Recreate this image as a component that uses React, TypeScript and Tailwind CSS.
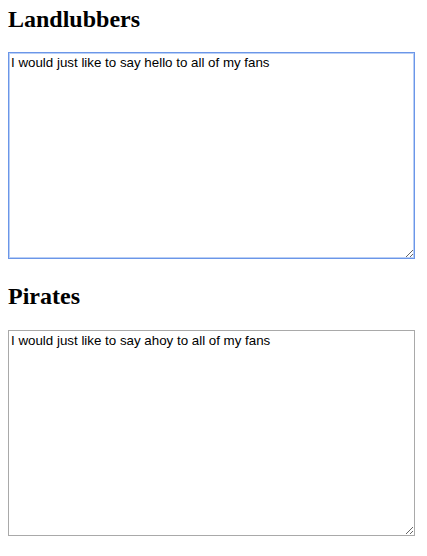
export default function App() {
  return (
    <div className="min-h-screen bg-white pl-[8px] pt-[6px]">
      <h2 className="mb-[19px] font-['Liberation_Serif',serif] text-[24px] font-bold leading-[27px] text-black">
        Landlubbers
      </h2>
      <textarea
        defaultValue="I would just like to say hello to all of my fans"
        className="mb-[24px] block h-[207px] w-[407px] resize border border-[#6b96e8] p-[2px] font-['Liberation_Sans',Arial,sans-serif] text-[13.33px] leading-[15px] text-black shadow-[0_0_0_1px_#b9cff6_inset] outline-none"
      />
      <h2 className="mb-[20px] font-['Liberation_Serif',serif] text-[24px] font-bold leading-[27px] text-black">
        Pirates
      </h2>
      <textarea
        defaultValue="I would just like to say ahoy to all of my fans"
        className="block h-[206px] w-[407px] resize border border-[#a9a9a9] p-[2px] font-['Liberation_Sans',Arial,sans-serif] text-[13.33px] leading-[15px] text-black outline-none"
      />
    </div>
  );
}
